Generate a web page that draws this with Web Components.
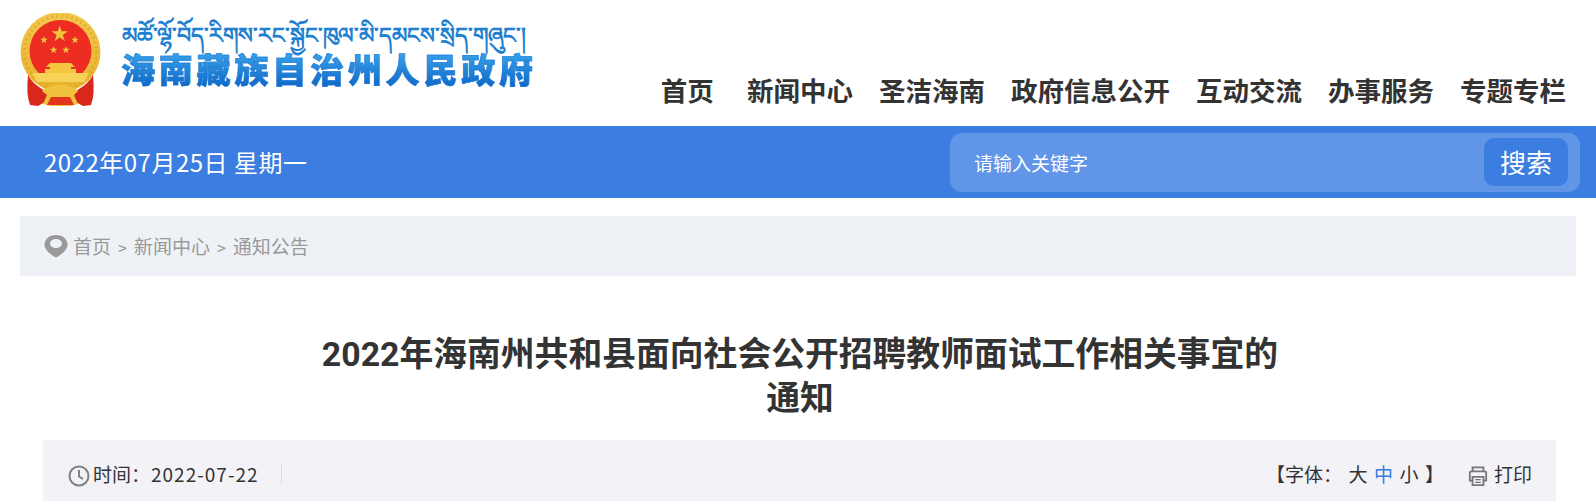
<!DOCTYPE html>
<html lang="zh-CN"><head><meta charset="utf-8"><title>通知</title>
<style>
html,body{margin:0;padding:0;background:#fff;overflow:hidden}
body{font-family:"Noto Sans CJK SC","Noto Sans",sans-serif;color:#333;height:501px}
</style></head><body>
<gov-header></gov-header>
<gov-bar></gov-bar>
<gov-crumb></gov-crumb>
<gov-title>2022年海南州共和县面向社会公开招聘教师面试工作相关事宜的<br>通知</gov-title>
<gov-meta></gov-meta>
<script>
function def(name,html){customElements.define(name,class extends HTMLElement{constructor(){super();this.attachShadow({mode:'open'}).innerHTML=html}})}
def('gov-emblem',`<style>:host{display:block;width:84px;height:93px}svg{display:block}</style>
<svg width="84" height="93" viewBox="0 0 84 93">
<defs><linearGradient id="g" x1="0" y1="0" x2="0" y2="1"><stop offset="0" stop-color="#f2c94e"/><stop offset="1" stop-color="#e8b02c"/></linearGradient>
<polygon id="s" points="0,-1 .2245,-.309 .951,-.309 .363,.118 .588,.809 0,.382 -.588,.809 -.363,.118 -.951,-.309 -.2245,-.309"/></defs>
<circle cx="42.500" cy="39" r="40" fill="url(#g)"/>
<circle cx="42.500" cy="39" r="36" fill="none" stroke="#d99d1f" stroke-width="3" stroke-dasharray="2 3" opacity=".55"/>
<circle cx="42.500" cy="38" r="31" fill="#ee2d22"/>
<g fill="#f3c640">
<use href="#s" transform="translate(41.700 21) scale(8.500)"/>
<use href="#s" transform="translate(26 27) scale(4)"/>
<use href="#s" transform="translate(57 27) scale(4)"/>
<use href="#s" transform="translate(35.600 37) scale(4)"/>
<use href="#s" transform="translate(48 37) scale(4)"/>
<path d="M32 50h21l4 4h-4v2h5v4H27v-4h5v-2h-4Z"/>
<path d="M14 60H71L66 69H19Z" fill="#f6d257"/>
</g>
<path d="M10 62Q14 70 24 76L30 80L32 91L27 89L20 93L12 92Q8 82 10 62Z" fill="#d8281b"/>
<path d="M75 62Q71 70 61 76L55 80L53 91L58 89L65 93L73 92Q77 82 75 62Z" fill="#d8281b"/>
<path d="M24 78Q30 72 42.500 72Q55 72 60 78L56 82L60 91L52 93H33L25 91L29 82Z" fill="#efc23c"/>
<path d="M33 84H52L56 92H29Z" fill="#e3361f"/>
</svg>`);
def('gov-logo',`<style>:host{display:flex;align-items:flex-start;gap:19px;padding:13px 0 0 18px}
.t{display:flex;flex-direction:column;padding-top:8px}
.bo{font:700 22px/29px "Liberation Sans","Noto Sans","DejaVu Sans",sans-serif;margin-left:1px;color:#1f7fd0;white-space:nowrap;height:29px}
.zh{font:900 34px/38px "Liberation Sans","Noto Sans CJK SC",sans-serif;letter-spacing:3.8px;white-space:nowrap;margin-top:2px;background:linear-gradient(#39a3ea,#0a63c4);-webkit-background-clip:text;background-clip:text;color:transparent;-webkit-text-stroke:.5px #1a78d6}
</style><gov-emblem></gov-emblem><div class="t"><div class="bo" lang="bo">མཚོ་ལྷོ་བོད་རིགས་རང་སྐྱོང་ཁུལ་མི་དམངས་སྲིད་གཞུང་།</div><div class="zh">海南藏族自治州人民政府</div></div>`);
def('gov-nav',`<style>:host{display:flex;align-items:center;padding:0 30px 19px 0;font:700 26.500px/34px "Noto Sans CJK SC",sans-serif;color:#333}
a{display:block;white-space:nowrap;margin-left:26px}a.f{width:60.200px;margin-left:0}</style>
<a class="f">首页</a><a>新闻中心</a><a>圣洁海南</a><a>政府信息公开</a><a>互动交流</a><a>办事服务</a><a>专题专栏</a>`);
def('gov-header',`<style>:host{display:flex;justify-content:space-between;align-items:flex-end;height:126px}</style><gov-logo style="align-self:flex-start"></gov-logo><gov-nav></gov-nav>`);
def('gov-bar',`<style>:host{display:flex;justify-content:space-between;align-items:center;height:72px;background:#3b7de0;color:#fff;padding:0 16px 0 44px;box-sizing:border-box}
.d{font:400 24px/34px "Noto Sans CJK SC",sans-serif;letter-spacing:.5px}
.s{display:flex;align-items:center;justify-content:space-between;width:630px;height:59px;box-sizing:border-box;background:#6195e8;border-radius:12px;padding:0 12px 0 24px;font:400 19px/26px "Noto Sans CJK SC",sans-serif}
.s span{padding-top:1px}
.b{width:84px;height:48px;border-radius:10px;background:#3b7de0;display:flex;align-items:center;justify-content:center;font-size:26px}
</style><div class="d">2022年07月25日 星期一</div><div class="s"><span>请输入关键字</span><div class="b">搜索</div></div>`);
def('gov-crumb',`<style>:host{display:flex;align-items:center;gap:5px;margin:18px 20px 0;height:60px;background:#eef2f6;padding-left:24px;box-sizing:border-box;font:400 19px/26px "Noto Sans CJK SC",sans-serif;color:#999}
svg{display:block}i{font-style:normal;font-size:16px;margin:0 7px}</style>
<svg width="24" height="24" viewBox="0 0 24 24"><path d="M12 1C5.500 1 .5 5.200 .5 10.500C.5 15.500 6 20.500 12 23.500C18 20.500 23.500 15.500 23.500 10.500C23.500 5.200 18.500 1 12 1Z" fill="#9a9a9a"/><ellipse cx="12" cy="9.500" rx="6" ry="4.500" fill="#eef2f6"/></svg>
<span>首页<i>&gt;</i>新闻中心<i>&gt;</i>通知公告</span>`);
def('gov-title',`<style>:host{display:block;margin:57px auto 0;width:970px;box-sizing:border-box;padding-left:4px;text-align:center;font:700 33.800px/44px Roboto,"Noto Sans CJK SC",sans-serif;color:#333}</style><slot></slot>`);
def('gov-meta',`<style>:host{display:flex;justify-content:space-between;align-items:center;margin:19px 40px 0 43px;height:61px;background:#f2f2f7;padding:6px 24px 0 25px;box-sizing:border-box;font:400 19px/26px "Noto Sans CJK SC",sans-serif;color:#333}
.l,.r{display:flex;align-items:center}svg{display:block;margin-top:4px}
.l>span{padding-right:22px;border-right:1px solid #ddd;margin-left:3px;line-height:21px}
.date{letter-spacing:1px;margin-left:1px}
.r b{font-weight:400;color:#3b7de0}.r i{font-style:normal;margin-left:6.500px}.fs{margin-right:24px}.p{margin-right:6px}</style>
<div class="l"><svg width="22" height="22" viewBox="0 0 22 22" fill="none" stroke="#808080" stroke-width="2"><circle cx="11" cy="11" r="9.500"/><path d="M11 5v6.500l4 2.500"/></svg><span>时间：<span class="date">2022-07-22</span></span></div>
<div class="r"><span class="fs">【字体：<i>大</i><i><b>中</b></i><i>小</i><i>】</i></span><svg class="p" width="20" height="22" viewBox="0 0 22 24" fill="none" stroke="#777" stroke-width="2"><path d="M5 7V2.500h12V7"/><path d="M5 17H2V8.500Q2 7 4 7H18Q20 7 20 8.500V17H17"/><path d="M5 13h12v9H5z"/><path d="M8 16h6M8 19h6" stroke-width="1.500"/></svg><span>打印</span></div>`);
</script>
</body></html>
